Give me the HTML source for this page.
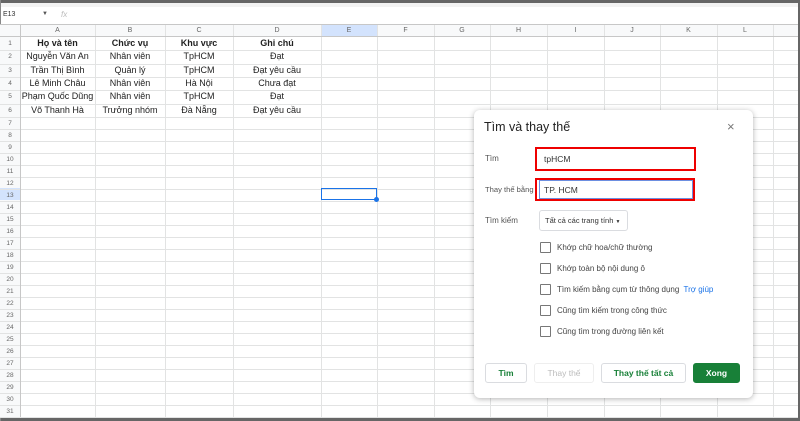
<!DOCTYPE html>
<html><head><meta charset="utf-8"><style>
*{margin:0;padding:0;box-sizing:border-box}
body{width:800px;height:421px;overflow:hidden;background:#fff;font-family:"Liberation Sans",Arial,sans-serif;position:relative}
.a{position:absolute}
.vl{position:absolute;width:1px;background:#e2e3e3;top:24px;height:393px}
.hl{position:absolute;height:1px;background:#e2e3e3;left:0;width:798px}
.ch{position:absolute;top:24px;height:13px;font-size:7px;color:#666;text-align:center;line-height:13px}
.rn{position:absolute;left:0;width:20px;font-size:6.5px;color:#666;text-align:center}
.c{position:absolute;font-size:9px;color:#222;text-align:center;white-space:nowrap}
.dl{position:absolute;font-size:8px;color:#555;white-space:nowrap}
.cb{position:absolute;left:540px;width:11px;height:11px;border:1.5px solid #777;border-radius:1px}
.ct{position:absolute;left:557px;font-size:8px;color:#444;white-space:nowrap}
.btn{position:absolute;top:363px;height:20px;border:1px solid #dadce0;border-radius:3px;font-size:8.5px;font-weight:bold;color:#188038;text-align:center;line-height:18px;white-space:nowrap}
</style></head><body>
<div class="a" style="left:0;top:0;width:800px;height:3px;background:#666"></div>
<div class="a" style="left:0;top:3px;width:800px;height:4px;background:#f3f3f3"></div>
<div class="a" style="left:798px;top:0;width:2px;height:421px;background:#666"></div>
<div class="a" style="left:0;top:417px;width:800px;height:4px;background:#666"></div>
<div class="a" style="left:0;top:0;width:1px;height:421px;background:#888"></div>
<div class="a" style="left:3px;top:11px;font-size:7px;color:#333">E13</div>
<div class="a" style="left:42px;top:11px;font-size:6px;color:#555">▼</div>
<div class="a" style="left:61px;top:10px;font-size:8px;color:#bbb;font-style:italic">fx</div>
<div class="a" style="left:0;top:24px;width:798px;height:13px;background:#f8f9fa"></div>
<div class="a" style="left:321px;top:24px;width:56px;height:13px;background:#d3e3fd"></div>
<div class="a" style="left:0;top:37px;width:20px;height:380px;background:#f8f9fa"></div>
<div class="a" style="left:0;top:188px;width:20px;height:12px;background:#d3e3fd"></div>
<div id="g"></div>
<div class="a" style="left:321px;top:188px;width:56px;height:12px;border:1.5px solid #1a73e8"></div>
<div class="a" style="left:374px;top:197px;width:5px;height:5px;background:#1a73e8;border-radius:50%"></div>
<div class="a" style="left:0;top:24px;width:798px;height:1px;background:#c7c7c7"></div>
<div class="a" style="left:0;top:36px;width:798px;height:1px;background:#c7c7c7"></div>
<div class="a" style="left:20px;top:24px;width:1px;height:393px;background:#c7c7c7"></div>

<!-- dialog -->
<div class="a" style="left:474px;top:110px;width:279px;height:288px;background:#fff;border-radius:6px;box-shadow:0 1px 6px rgba(0,0,0,.3)"></div>
<div class="a" style="left:484px;top:120px;font-size:12.5px;color:#222">Tìm và thay thế</div>
<div class="a" style="left:727px;top:119px;font-size:13px;color:#777">×</div>
<div class="dl" style="left:485px;top:154px">Tìm</div>
<div class="a" style="left:535px;top:147px;width:161px;height:24px;border:2px solid #e00"></div>
<div class="a" style="left:544px;top:154px;font-size:8.5px;color:#333">tpHCM</div>
<div class="dl" style="left:485px;top:185px;font-size:7.6px">Thay thế bằng</div>
<div class="a" style="left:535px;top:178px;width:160px;height:23px;border:2px solid #e00"></div>
<div class="a" style="left:539px;top:180px;width:154px;height:19px;border:1px solid #6d8fe0"></div>
<div class="a" style="left:544px;top:185px;font-size:8.5px;color:#333">TP. HCM</div>
<div class="dl" style="left:485px;top:216px">Tìm kiếm</div>
<div class="a" style="left:539px;top:210px;width:89px;height:21px;border:1px solid #dadce0;border-radius:3px;font-size:7.5px;color:#333;line-height:19px;padding-left:5px;white-space:nowrap">Tất cả các trang tính <span style="font-size:5px">▼</span></div>
<div class="cb" style="top:242px"></div><div class="ct" style="top:243px">Khớp chữ hoa/chữ thường</div>
<div class="cb" style="top:263px"></div><div class="ct" style="top:264px">Khớp toàn bộ nội dung ô</div>
<div class="cb" style="top:284px"></div><div class="ct" style="top:285px">Tìm kiếm bằng cụm từ thông dụng <span style="color:#1a73e8;margin-left:2px">Trợ giúp</span></div>
<div class="cb" style="top:305px"></div><div class="ct" style="top:306px">Cũng tìm kiếm trong công thức</div>
<div class="cb" style="top:326px"></div><div class="ct" style="top:327px">Cũng tìm trong đường liên kết</div>
<div class="btn" style="left:485px;width:42px">Tìm</div>
<div class="btn" style="left:534px;width:60px;color:#bbb;font-weight:normal;border-color:#eee">Thay thế</div>
<div class="btn" style="left:601px;width:85px">Thay thế tất cả</div>
<div class="btn" style="left:693px;width:47px;background:#188038;border-color:#188038;color:#fff">Xong</div>

<script>
var g=document.getElementById('g'),h='';
var cols=[20,95,165,233,321,377,434,490,547,604,660,717,773];
var names='ABCDEFGHIJKLM';
for(var i=0;i<cols.length;i++){h+='<div class="vl" style="left:'+cols[i]+'px"></div>';
var w=(cols[i+1]||830)-cols[i];h+='<div class="ch" style="left:'+cols[i]+'px;width:'+w+'px">'+names[i]+'</div>';}
var ys=[37];for(var r=1;r<=6;r++)ys.push(37+Math.round(r*13.33));
for(var r=7;r<=32;r++)ys.push(117+(r-6)*12);
for(var r=1;r<=31;r++){var y=ys[r];h+='<div class="hl" style="top:'+y+'px"></div>';
h+='<div class="rn" style="top:'+(ys[r-1]+3)+'px">'+r+'</div>';}
var d=[['Họ và tên','Chức vụ','Khu vực','Ghi chú'],['Nguyễn Văn An','Nhân viên','TpHCM','Đạt'],['Trần Thị Bình','Quản lý','TpHCM','Đạt yêu cầu'],['Lê Minh Châu','Nhân viên','Hà Nội','Chưa đạt'],['Phạm Quốc Dũng','Nhân viên','TpHCM','Đạt'],['Võ Thanh Hà','Trưởng nhóm','Đà Nẵng','Đạt yêu cầu']];
for(var r=0;r<6;r++)for(var c=0;c<4;c++){h+='<div class="c" style="left:'+cols[c]+'px;width:'+(cols[c+1]-cols[c])+'px;top:'+(ys[r]+1)+'px;'+(r==0?'font-weight:bold':'')+'">'+d[r][c]+'</div>';}
g.innerHTML=h;
</script>
</body></html>
